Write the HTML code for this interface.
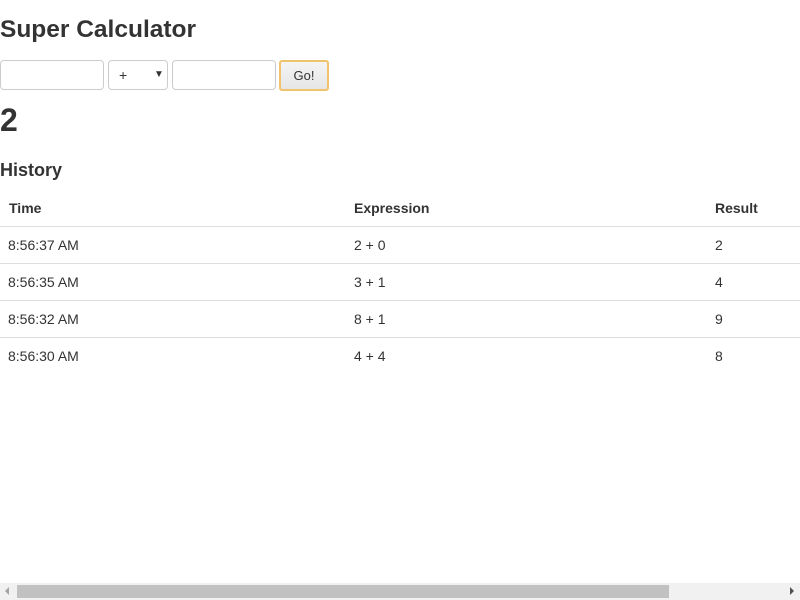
<!DOCTYPE html>
<html><head><style>
body{margin:0;width:800px;height:600px;overflow:hidden;font-family:"Liberation Sans",sans-serif;color:#333;background:#fff;position:relative}
h1{position:absolute;left:0;top:16px;margin:0;font-size:24.5px;font-weight:bold;}
.inp{position:absolute;top:60px;border:1px solid #ccc;border-radius:4px;box-sizing:border-box;height:30px;background:#fff}
.go{position:absolute;left:279px;top:60px;width:50px;height:31px;box-sizing:border-box;border:2px solid #f0c36d;border-radius:3px;background:linear-gradient(#f4f4f4,#e6e6e6);font-size:13px;text-align:center;line-height:28px}
.res{position:absolute;left:0;top:102px;font-size:32px;font-weight:bold}
h3{position:absolute;left:0;top:160px;margin:0;font-size:18px;font-weight:bold;color:#333}
.row{position:absolute;left:0;width:800px;height:37px;font-size:14px;line-height:37px}
.row span{position:absolute}
.b{border-top:1px solid #ddd}
</style></head><body>
<h1>Super Calculator</h1>
<div class="inp" style="left:0;width:104px"></div>
<div class="inp" style="left:108px;width:60px;font-size:14px;line-height:28px"><span style="position:absolute;left:10px">+</span><span style="position:absolute;left:45px;font-size:10px">▼</span></div>
<div class="inp" style="left:172px;width:104px"></div>
<div class="go">Go!</div>
<div class="res">2</div>
<h3>History</h3>
<div class="row" style="top:190px;font-weight:bold"><span style="left:9px">Time</span><span style="left:354px">Expression</span><span style="left:715px">Result</span></div>
<div class="row b" style="top:226px"><span style="left:8px">8:56:37 AM</span><span style="left:354px">2 + 0</span><span style="left:715px">2</span></div>
<div class="row b" style="top:263px"><span style="left:8px">8:56:35 AM</span><span style="left:354px">3 + 1</span><span style="left:715px">4</span></div>
<div class="row b" style="top:300px"><span style="left:8px">8:56:32 AM</span><span style="left:354px">8 + 1</span><span style="left:715px">9</span></div>
<div class="row b" style="top:337px"><span style="left:8px">8:56:30 AM</span><span style="left:354px">4 + 4</span><span style="left:715px">8</span></div>
<div style="position:absolute;left:0;top:583px;width:800px;height:17px;background:#f1f1f1"></div>
<div style="position:absolute;left:17px;top:585px;width:652px;height:13px;background:#c1c1c1"></div>
<div style="position:absolute;left:5px;top:587px;width:0;height:0;border-top:4px solid transparent;border-bottom:4px solid transparent;border-right:4px solid #a3a3a3"></div>
<div style="position:absolute;left:790px;top:587px;width:0;height:0;border-top:4px solid transparent;border-bottom:4px solid transparent;border-left:4px solid #505050"></div>
</body></html>
